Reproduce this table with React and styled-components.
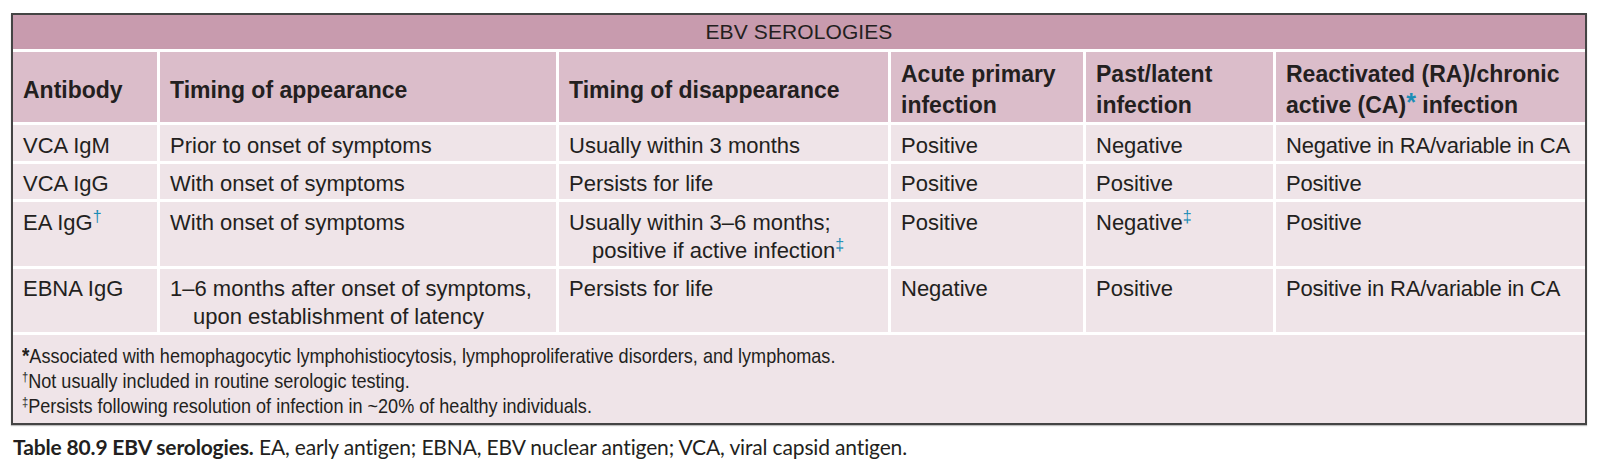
import React from "react";
import styled, { createGlobalStyle, css } from "styled-components";

const GlobalStyle = createGlobalStyle`
  body {
    margin: 0;
    background: #fff;
    color: #231f20;
    font-family: "Liberation Sans", Arial, sans-serif;
  }
`;

const Page = styled.div`
  padding: 13px 13px 0 11px;
`;

const Table = styled.div`
  display: grid;
  grid-template-columns: 144px 396px 329px 192px 187px 1fr;
  gap: 3px;
  background: #fff;
  border: 2px solid #444;
  box-shadow: 0 1px 1px rgba(0, 0, 0, 0.25);
`;

const Title = styled.div`
  grid-column: 1 / -1;
  height: 34px;
  display: flex;
  align-items: center;
  justify-content: center;
  background: #c89bae;
  font-size: 21px;
  letter-spacing: 0.1px;
`;

const HeadCell = styled.div`
  display: flex;
  align-items: center;
  height: 70px;
  box-sizing: border-box;
  padding: 6px 10px 0;
  background: #dbbdca;
  font-size: 23px;
  font-weight: bold;
  line-height: 31px;
`;

const Cell = styled.div`
  background: #efe4e8;
  font-size: 22px;
  line-height: 28px;
  padding: 6.5px 10px 1px;
  ${props => props.hang && css`
    padding-left: 33px;
    text-indent: -23px;
  `}
  ${props => props.nowrap && css`
    white-space: nowrap;
    letter-spacing: -0.2px;
  `}
`;

const Mark = styled.sup`
  color: #1b8db6;
  font-size: 16px;
  line-height: 0;
  vertical-align: 8px;
  ${props => props.big && css`
    font-size: 25px;
    vertical-align: 2px;
  `}
`;

const Notes = styled.div`
  grid-column: 1 / -1;
  height: 88px;
  box-sizing: border-box;
  padding: 7.5px 9px 0;
  background: #efe4e8;
  font-size: 21px;
  line-height: 25px;
`;

const NoteLine = styled.div`
  white-space: nowrap;
  transform: scaleX(0.86);
  transform-origin: left center;
`;

const NoteMark = styled.span`
  font-size: ${props => (props.star ? "22px" : "13px")};
  font-weight: ${props => (props.star ? "bold" : "normal")};
  vertical-align: ${props => (props.star ? "0" : "7px")};
  line-height: 0;
`;

const Caption = styled.p`
  margin: 9px 0 0 2px;
  font-family: Lato, "Open Sans", sans-serif;
  font-size: 21px;
  letter-spacing: -0.15px;
  line-height: 26px;
  b {
    font-weight: bold;
  }
`;

const headers = [
  "Antibody",
  "Timing of appearance",
  "Timing of disappearance",
  "Acute primary infection",
  "Past/latent infection",
];

const rows = [
  {
    name: "VCA IgM",
    appear: "Prior to onset of symptoms",
    disappear: "Usually within 3 months",
    acute: "Positive",
    past: "Negative",
    reactivated: "Negative in RA/variable in CA",
  },
  {
    name: "VCA IgG",
    appear: "With onset of symptoms",
    disappear: "Persists for life",
    acute: "Positive",
    past: "Positive",
    reactivated: "Positive",
  },
  {
    name: "EA IgG",
    nameMark: "†",
    appear: "With onset of symptoms",
    disappear: "Usually within 3–6 months; positive if active infection",
    disappearMark: "‡",
    acute: "Positive",
    past: "Negative",
    pastMark: "‡",
    reactivated: "Positive",
  },
  {
    name: "EBNA IgG",
    appear: "1–6 months after onset of symptoms, upon establishment of latency",
    disappear: "Persists for life",
    acute: "Negative",
    past: "Positive",
    reactivated: "Positive in RA/variable in CA",
  },
];

const Row = ({ row }) => (
  <>
    <Cell>
      {row.name}
      {row.nameMark && <Mark>{row.nameMark}</Mark>}
    </Cell>
    <Cell hang>{row.appear}</Cell>
    <Cell hang>
      {row.disappear}
      {row.disappearMark && <Mark>{row.disappearMark}</Mark>}
    </Cell>
    <Cell>{row.acute}</Cell>
    <Cell>
      {row.past}
      {row.pastMark && <Mark>{row.pastMark}</Mark>}
    </Cell>
    <Cell nowrap>{row.reactivated}</Cell>
  </>
);

const App = () => (
  <Page>
    <GlobalStyle />
    <Table>
      <Title>EBV SEROLOGIES</Title>
      {headers.map(h => (
        <HeadCell key={h}>
          <span>{h}</span>
        </HeadCell>
      ))}
      <HeadCell>
        <span>
          Reactivated (RA)/chronic active (CA)<Mark big>*</Mark> infection
        </span>
      </HeadCell>
      {rows.map(r => (
        <Row key={r.name} row={r} />
      ))}
      <Notes>
        <NoteLine><NoteMark star>*</NoteMark>Associated with hemophagocytic lymphohistiocytosis, lymphoproliferative disorders, and lymphomas.</NoteLine>
        <NoteLine><NoteMark>†</NoteMark>Not usually included in routine serologic testing.</NoteLine>
        <NoteLine><NoteMark>‡</NoteMark>Persists following resolution of infection in ~20% of healthy individuals.</NoteLine>
      </Notes>
    </Table>
    <Caption>
      <b>Table 80.9 EBV serologies.</b> EA, early antigen; EBNA, EBV nuclear antigen; VCA, viral capsid antigen.
    </Caption>
  </Page>
);

export default App;
